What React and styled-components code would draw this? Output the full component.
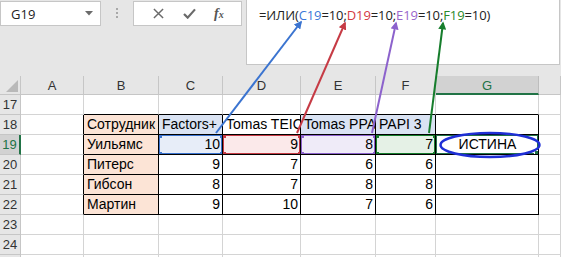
import React from "react";
import styled, { createGlobalStyle } from "styled-components";

const GlobalStyle = createGlobalStyle`
	html, body {
		margin: 0;
		padding: 0;
		background: #fff;
	}
	body {
		font-family: "Liberation Sans", Arial, sans-serif;
	}
`;

const GREEN = "#217346";

const REF = {
	blue: { line: "#3b74d0", fill: "#e7edf8", text: "#3b78d8" },
	red: { line: "#c63b45", fill: "#fbe9ea", text: "#d43a3f" },
	purple: { line: "#8c62cc", fill: "#efebf8", text: "#9a66cc" },
	green: { line: "#167d2c", fill: "#e5f1e6", text: "#2a8a2a" },
};

const COLS = ["A", "B", "C", "D", "E", "F", "G", ""];
const ROWS = [17, 18, 19, 20, 21, 22, 23, 24, 25];

const names = { 18: "Сотрудник", 19: "Уильямс", 20: "Питерс", 21: "Гибсон", 22: "Мартин" };
const heads = ["Factors+", "Tomas TEIO", "Tomas PPA", "PAPI 3"];
const scores = {
	19: [10, 9, 8, 7],
	20: [9, 7, 6, 6],
	21: [8, 7, 8, 8],
	22: [9, 10, 7, 6],
};
const refOrder = ["blue", "red", "purple", "green"];

const formula = [
	{ t: "=ИЛИ(" },
	{ t: "C19", c: "blue" },
	{ t: "=10;" },
	{ t: "D19", c: "red" },
	{ t: "=10;" },
	{ t: "E19", c: "purple" },
	{ t: "=10;" },
	{ t: "F19", c: "green" },
	{ t: "=10)" },
];

const arrows = [
	{ c: "blue", x1: 216, y1: 133, x2: 301, y2: 22 },
	{ c: "red", x1: 297, y1: 133, x2: 345, y2: 23 },
	{ c: "purple", x1: 372, y1: 133, x2: 396, y2: 23 },
	{ c: "green", x1: 429, y1: 133, x2: 443, y2: 23 },
];

const cellFor = (r, c) => {
	const inTable = r >= 18 && r <= 22 && c >= 1 && c <= 6;
	const cell = {
		text: "",
		align: "left",
		fill: null,
		edgeR: inTable || (c === 0 && r >= 18 && r <= 22),
		edgeB: inTable || (r === 17 && c >= 1 && c <= 6),
		refc: null,
		active: false,
	};
	if (c === 1 && names[r]) {
		cell.text = names[r];
		cell.fill = "#fce4d6";
	}
	if (r === 18 && c >= 2 && c <= 5) {
		cell.text = heads[c - 2];
		cell.fill = c === 3 ? null : "#dae3f3";
	}
	if (scores[r] && c >= 2 && c <= 5) {
		cell.text = scores[r][c - 2];
		cell.align = "right";
	}
	if (r === 19 && c >= 2 && c <= 5) {
		cell.refc = refOrder[c - 2];
		cell.fill = REF[cell.refc].fill;
	}
	if (r === 19 && c === 6) {
		cell.text = "ИСТИНА";
		cell.align = "center";
		cell.active = true;
	}
	return cell;
};

const Corners = ({ color }) => (
	<>
		<Handle $color={color} $top $left />
		<Handle $color={color} $top />
		<Handle $color={color} $left />
		<Handle $color={color} />
	</>
);

const App = () => {
	return (
		<>
			<GlobalStyle />
			<Window>
				<Toolbar>
					<NameBox>
						G19
						<Caret viewBox="0 0 8 5">
							<path d="M0 0h8L4 4.5z" fill="#6b6b6b" />
						</Caret>
					</NameBox>
					<Grip>
						<b />
						<b />
						<b />
					</Grip>
					<ActionBox>
						<ActionIcon viewBox="0 0 12 12">
							<path d="M1 1l10 10M11 1L1 11" stroke="#6a6a6a" strokeWidth="1.6" />
						</ActionIcon>
						<ActionIcon viewBox="0 0 14 12">
							<path d="M1 6.5l4 4L13 1.5" stroke="#6a6a6a" strokeWidth="2.4" fill="none" />
						</ActionIcon>
						<Fx>
							f<sub>x</sub>
						</Fx>
					</ActionBox>
					<FormulaBox>
						{formula.map((part, i) => (
							<Token key={`tok-${i}`} $color={part.c ? REF[part.c].text : "#222"}>
								{part.t}
							</Token>
						))}
					</FormulaBox>
				</Toolbar>

				<Sheet>
					<SelectAll>
						<svg width="12" height="12" viewBox="0 0 12 12">
							<path d="M12 0v12H0z" fill="#b9b9b9" />
						</svg>
					</SelectAll>
					{COLS.map((col, i) => (
						<ColHead key={`col-${i}`} $on={col === "G"}>
							{col}
						</ColHead>
					))}

					{ROWS.map((r) => (
						<React.Fragment key={`row-${r}`}>
							<RowHead $on={r === 19}>{r < 25 ? r : ""}</RowHead>
							{COLS.map((col, c) => {
								const cell = cellFor(r, c);
								return (
									<Cell
										key={`cell-${r}-${c}`}
										$align={cell.align}
										$fill={cell.fill}
										$edgeR={cell.edgeR}
										$edgeB={cell.edgeB}
									>
										<CellText>{cell.text}</CellText>
										{cell.refc && (
											<RefFrame $color={REF[cell.refc].line}>
												<Corners color={REF[cell.refc].line} />
											</RefFrame>
										)}
										{cell.active && (
											<ActiveFrame>
												<FillHandle />
											</ActiveFrame>
										)}
									</Cell>
								);
							})}
						</React.Fragment>
					))}
				</Sheet>

				<Annotations viewBox="0 0 561 257">
					<defs>
						{arrows.map((a) => (
							<marker
								key={`m-${a.c}`}
								id={`head-${a.c}`}
								viewBox="0 0 10 10"
								refX="8"
								refY="5"
								markerWidth="4"
								markerHeight="4"
								orient="auto"
							>
								<path d="M0 0L10 5L0 10z" fill={REF[a.c].line} />
							</marker>
						))}
					</defs>
					{arrows.map((a) => (
						<line
							key={`a-${a.c}`}
							x1={a.x1}
							y1={a.y1}
							x2={a.x2}
							y2={a.y2}
							stroke={REF[a.c].line}
							strokeWidth="2"
							markerEnd={`url(#head-${a.c})`}
						/>
					))}
					<ellipse cx="490" cy="145" rx="49.5" ry="12" fill="none" stroke="#1f2fd6" strokeWidth="2.4" />
				</Annotations>
			</Window>
		</>
	);
};

const Window = styled.div`
	position: relative;
	width: 561px;
	height: 257px;
	overflow: hidden;
	background: #e6e6e6;
`;

const Toolbar = styled.div`
	display: flex;
	align-items: flex-start;
	height: 76px;
`;

const NameBox = styled.div`
	box-sizing: border-box;
	display: flex;
	align-items: center;
	justify-content: space-between;
	width: 101px;
	height: 25px;
	margin-top: 1px;
	padding: 0 7px 0 10px;
	background: #fff;
	border: 1px solid #c6c6c6;
	font-family: "Open Sans", "Liberation Sans", sans-serif;
	font-size: 13px;
	color: #222;
`;

const Caret = styled.svg`
	width: 8px;
	height: 5px;
`;

const Grip = styled.div`
	display: flex;
	flex-direction: column;
	align-items: center;
	gap: 2px;
	width: 32px;
	padding-top: 8px;

	b {
		width: 2px;
		height: 2px;
		background: #a8a8a8;
	}
`;

const ActionBox = styled.div`
	box-sizing: border-box;
	display: flex;
	align-items: center;
	justify-content: space-around;
	width: 109px;
	height: 25px;
	margin-top: 1px;
	padding: 0 8px 0 10px;
	background: #fff;
	border: 1px solid #c6c6c6;
`;

const ActionIcon = styled.svg`
	width: ${(p) => (p.viewBox === "0 0 12 12" ? "11px" : "13px")};
	height: 11px;
`;

const Fx = styled.span`
	font-family: "Liberation Serif", "Times New Roman", serif;
	font-style: italic;
	font-weight: bold;
	font-size: 14px;
	color: #555;
	line-height: 1;

	sub {
		font-size: 10px;
		vertical-align: 0;
	}
`;

const FormulaBox = styled.div`
	box-sizing: border-box;
	width: 314px;
	height: 66px;
	margin-top: -1px;
	margin-left: 4px;
	padding: 6px 0 0 12px;
	background: #fff;
	border: 1px solid #c6c6c6;
	font-family: "Open Sans", "Liberation Sans", sans-serif;
	font-size: 13px;
	letter-spacing: -0.1px;
	white-space: nowrap;
`;

const Token = styled.span`
	color: ${(p) => p.$color};
`;

const Sheet = styled.div`
	display: grid;
	grid-template-columns: 21px 63px 75px 64px 78px 75px 60px 103px 1fr;
	grid-template-rows: 19px;
	grid-auto-rows: 20px;
	background: #fff;
`;

const SelectAll = styled.div`
	box-sizing: border-box;
	display: flex;
	align-items: flex-end;
	justify-content: flex-end;
	padding: 0 2px 2px 0;
	background: #e6e6e6;
	border-right: 1px solid #c6c6c6;
	border-bottom: 1px solid #c6c6c6;
`;

const ColHead = styled.div`
	box-sizing: border-box;
	display: flex;
	align-items: center;
	justify-content: center;
	background: ${(p) => (p.$on ? "#d2d2d2" : "#e6e6e6")};
	color: ${(p) => (p.$on ? GREEN : "#333")};
	border-right: 1px solid ${(p) => (p.$on ? "#bdbdbd" : "#c6c6c6")};
	border-bottom: ${(p) => (p.$on ? `2px solid ${GREEN}` : "1px solid #c6c6c6")};
	font-size: 13px;
	padding-top: 1px;
`;

const RowHead = styled.div`
	box-sizing: border-box;
	display: flex;
	align-items: center;
	justify-content: center;
	background: ${(p) => (p.$on ? "#d2d2d2" : "#e6e6e6")};
	color: ${(p) => (p.$on ? GREEN : "#333")};
	border-right: ${(p) => (p.$on ? `2px solid ${GREEN}` : "1px solid #c6c6c6")};
	border-bottom: 1px solid #c6c6c6;
	font-size: 13px;
`;

const Cell = styled.div`
	box-sizing: border-box;
	position: relative;
	display: flex;
	align-items: flex-end;
	justify-content: ${(p) =>
		p.$align === "right" ? "flex-end" : p.$align === "center" ? "center" : "flex-start"};
	padding: 0 2px 2px 3px;
	background: ${(p) => p.$fill || "#fff"};
	border-right: 1px solid ${(p) => (p.$edgeR ? "#000" : "#d4d4d4")};
	border-bottom: 1px solid ${(p) => (p.$edgeB ? "#000" : "#d4d4d4")};
	font-size: 14px;
	color: #000;
	overflow: hidden;
	white-space: nowrap;
`;

const CellText = styled.span`
	line-height: 16px;
`;

const RefFrame = styled.span`
	position: absolute;
	inset: -1px;
	border: 2px solid ${(p) => p.$color};
	z-index: 2;
`;

const Handle = styled.i`
	position: absolute;
	width: 5px;
	height: 5px;
	background: ${(p) => p.$color};
	${(p) => (p.$top ? "top: -3.5px;" : "bottom: -3.5px;")}
	${(p) => (p.$left ? "left: -3.5px;" : "right: -3.5px;")}
`;

const ActiveFrame = styled.span`
	position: absolute;
	inset: -1px;
	border: 2px solid ${GREEN};
	z-index: 3;
`;

const FillHandle = styled.i`
	position: absolute;
	right: -4px;
	bottom: -4px;
	width: 5px;
	height: 5px;
	background: ${GREEN};
	border: 1px solid #fff;
`;

const Annotations = styled.svg`
	position: absolute;
	top: 0;
	left: 0;
	width: 561px;
	height: 257px;
	pointer-events: none;
	z-index: 5;
`;

export default App;
